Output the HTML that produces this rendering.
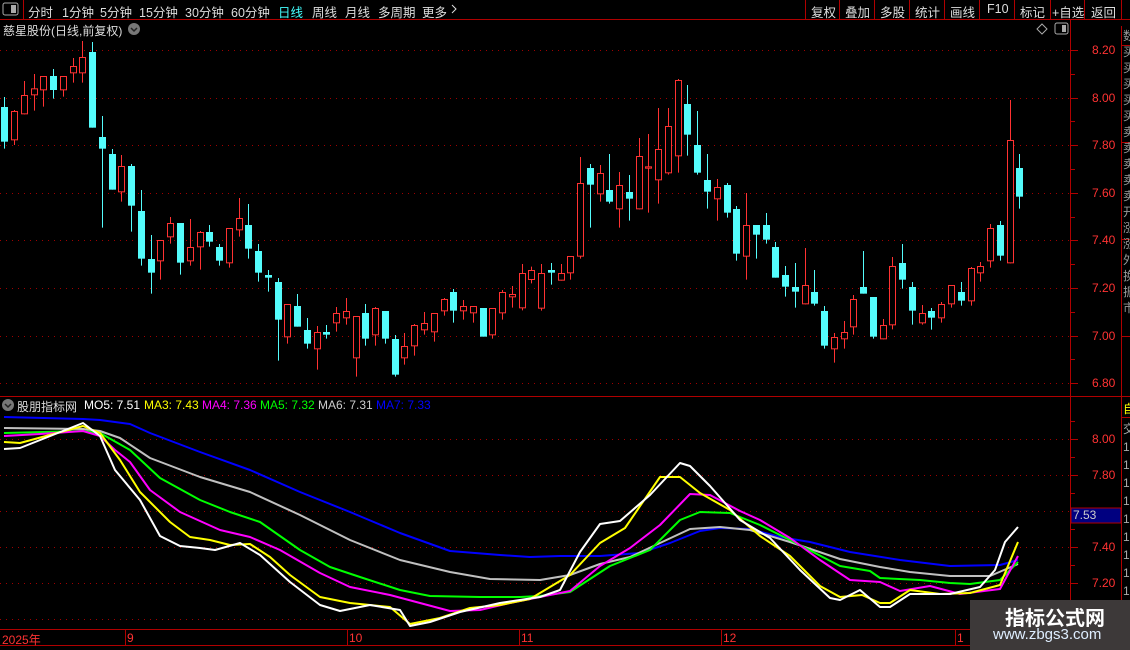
<!DOCTYPE html>
<html><head><meta charset="utf-8">
<style>
body{margin:0;width:1130px;height:650px;background:#000;overflow:hidden;position:relative;font-family:"Liberation Sans","Noto Sans CJK SC",sans-serif;font-size:12px;color:#ddd}
.a{position:absolute;white-space:nowrap}
.t{position:absolute;top:2px;font-size:12.5px;white-space:nowrap}
.h{position:absolute;top:398px;font-size:12px;white-space:nowrap}
</style></head><body>
<svg class="a" style="left:0;top:0" width="1130" height="650" id="s" xmlns="http://www.w3.org/2000/svg">
<g stroke="#b00000" stroke-width="1" fill="none">
<line x1="0" y1="19.5" x2="1130" y2="19.5"/>
<line x1="23.5" y1="0" x2="23.5" y2="19"/>
<line x1="805.5" y1="0" x2="805.5" y2="19"/><line x1="839.5" y1="0" x2="839.5" y2="19"/><line x1="874.5" y1="0" x2="874.5" y2="19"/><line x1="909.5" y1="0" x2="909.5" y2="19"/><line x1="944.5" y1="0" x2="944.5" y2="19"/><line x1="979.5" y1="0" x2="979.5" y2="19"/><line x1="1014.5" y1="0" x2="1014.5" y2="19"/><line x1="1050.5" y1="0" x2="1050.5" y2="19"/><line x1="1084.5" y1="0" x2="1084.5" y2="19"/><line x1="1121.5" y1="0" x2="1121.5" y2="19"/>
<line x1="1070.5" y1="20" x2="1070.5" y2="645"/>
<line x1="1121.5" y1="26" x2="1121.5" y2="650"/>
<line x1="0" y1="396.5" x2="1130" y2="396.5"/>
<line x1="0" y1="629.5" x2="1070" y2="629.5"/>
<line x1="0" y1="645.5" x2="1070" y2="645.5"/>
<line x1="1121" y1="45.5" x2="1130" y2="45.5"/><line x1="1121" y1="142.5" x2="1130" y2="142.5"/><line x1="1121" y1="239.5" x2="1130" y2="239.5"/><line x1="1121" y1="336.5" x2="1130" y2="336.5"/><line x1="1121" y1="417.5" x2="1130" y2="417.5"/>
<line x1="125.5" y1="630" x2="125.5" y2="645"/><line x1="347.5" y1="630" x2="347.5" y2="645"/><line x1="519.5" y1="630" x2="519.5" y2="645"/><line x1="721.5" y1="630" x2="721.5" y2="645"/><line x1="955.5" y1="630" x2="955.5" y2="645"/>
</g>
<g id="grid" stroke="#a00000" stroke-dasharray="1,5" stroke-width="1"></g>
<g id="ticks" stroke="#b00000"></g>
<g id="c"></g>
<g id="l" fill="none" stroke-width="2" stroke-linejoin="round"></g>
<rect x="1071" y="508" width="50" height="15" fill="#000080" stroke="#b00000"/>
<rect x="3" y="3" width="15" height="12" rx="2" fill="none" stroke="#aaa"/><rect x="11" y="5" width="5" height="8" fill="#aaa"/>
<rect x="1055" y="23" width="13" height="11" rx="2" fill="none" stroke="#aaa"/><rect x="1062" y="25" width="4" height="7" fill="#aaa"/>
<path d="M1042 24 l5 5 -5 5 -5 -5z" fill="none" stroke="#aaa"/>
<circle cx="134" cy="29" r="6" fill="#777"/><path d="M131 28 l3 3 3-3" stroke="#222" fill="none" stroke-width="1.5"/>
<circle cx="8" cy="405" r="6" fill="#777"/><path d="M5 404 l3 3 3-3" stroke="#222" fill="none" stroke-width="1.5"/>
<path d="M452 5 l4 4 -4 4" stroke="#ddd" fill="none"/>
</svg>
<div class="t" style="left:28px">分时</div>
<div class="t" style="left:62px">1分钟</div>
<div class="t" style="left:100px">5分钟</div>
<div class="t" style="left:139px">15分钟</div>
<div class="t" style="left:185px">30分钟</div>
<div class="t" style="left:231px">60分钟</div>
<div class="t" style="left:278px;color:#4ff">日线</div>
<div class="t" style="left:312px">周线</div>
<div class="t" style="left:345px">月线</div>
<div class="t" style="left:378px">多周期</div>
<div class="t" style="left:422px">更多</div>
<div class="t" style="left:811px">复权</div>
<div class="t" style="left:845px">叠加</div>
<div class="t" style="left:880px">多股</div>
<div class="t" style="left:915px">统计</div>
<div class="t" style="left:950px">画线</div>
<div class="t" style="left:987px">F10</div>
<div class="t" style="left:1020px">标记</div>
<div class="t" style="left:1052px">+自选</div>
<div class="t" style="left:1091px">返回</div>
<div class="a" style="left:3px;top:22px;font-size:12px">慈星股份(日线,前复权)</div>
<div class="h" style="left:17px;color:#ddd">股朋指标网</div>
<div class="h" style="left:84px;color:#fff">MO5: 7.51</div>
<div class="h" style="left:144px;color:#ff0">MA3: 7.43</div>
<div class="h" style="left:202px;color:#f0f">MA4: 7.36</div>
<div class="h" style="left:260px;color:#0f0">MA5: 7.32</div>
<div class="h" style="left:318px;color:#ccc">MA6: 7.31</div>
<div class="h" style="left:376px;color:#00f">MA7: 7.33</div>
<div id="ax"></div>
<div class="a" style="left:1073px;top:508px;color:#ccc;font-size:12px">7.53</div>
<div class="a" style="left:2px;top:631px;color:#f33;font-size:12px">2025年</div>
<div class="a" style="left:127px;top:631px;color:#f33">9</div>
<div class="a" style="left:349px;top:631px;color:#f33">10</div>
<div class="a" style="left:521px;top:631px;color:#f33">11</div>
<div class="a" style="left:723px;top:631px;color:#f33">12</div>
<div class="a" style="left:957px;top:631px;color:#f33">1</div>
<div class="a" style="left:1123px;top:28px;width:7px;overflow:hidden;color:#999;line-height:16px;font-size:12px">数<br>买<br>买<br>买<br>买<br>买<br>卖<br>卖<br>卖<br>卖<br>卖<br>开<br>涨<br>涨<br>外<br>换<br>振<br>市</div>
<div class="a" style="left:1123px;top:400px;width:7px;overflow:hidden;color:#ff0">自</div>
<div class="a" style="left:1123px;top:420px;width:7px;overflow:hidden;color:#aaa;line-height:18px">交<br>1<br>1<br>1<br>1<br>1<br>1<br>1<br>1<br>1<br>1<br>1</div>
<div class="a" style="left:970px;top:600px;width:160px;height:50px;background:#3d3939"></div>
<div class="a" style="left:1005px;top:602px;color:#fff;font-size:20px;font-weight:bold">指标公式网</div>
<div class="a" style="left:993px;top:626px;color:#dfeeff;font-size:15px">www.zbgs3.com</div>
<script>
var NS="http://www.w3.org/2000/svg";
function el(p,t,a){var e=document.createElementNS(NS,t);for(var k in a)e.setAttribute(k,a[k]);p.appendChild(e);return e;}
var g=document.getElementById('grid');
[50,97.6,145,193,240,288,336,383].forEach(function(y){el(g,'line',{x1:0,x2:1070,y1:Math.round(y)+.5,y2:Math.round(y)+.5});});
[439,475,511,547,583,619].forEach(function(y){el(g,'line',{x1:0,x2:1070,y1:y+.5,y2:y+.5});});
var tk=document.getElementById('ticks');
for(var y=50;y<=390;y+=23.8)el(tk,'line',{x1:1071,x2:(Math.round((y-50)/23.8)%2?1075:1078),y1:Math.round(y)+.5,y2:Math.round(y)+.5});
for(var y=421;y<=628;y+=18)el(tk,'line',{x1:1071,x2:(Math.round((y-439)/18)%2?1075:1078),y1:Math.round(y)+.5,y2:Math.round(y)+.5});
var ax=document.getElementById('ax'),h='';
['8.20','8.00','7.80','7.60','7.40','7.20','7.00','6.80'].forEach(function(t,i){h+='<div class="a" style="left:1092px;top:'+(43+i*47.6)+'px;color:#f33">'+t+'</div>';});
[['8.00',439],['7.80',475],['7.40',547],['7.20',583]].forEach(function(a){h+='<div class="a" style="left:1092px;top:'+(a[1]-7)+'px;color:#f33">'+a[0]+'</div>';});
ax.innerHTML=h;
var A=[['c',201,305,171,326],['r',213,301,210,315],['r',165,223,123,223],['r',145,166,102,212],['r',108,151,108,200],['c',108,150,87,176],['r',108,151,108,170],['r',78,100,54,128],['r',51,100,3,128],['c',36,263,6,263],['c',291,326,228,563],['c',342,449,327,449],['r',378,457,345,485],['c',378,497,372,575],['c',513,656,450,677],['c',657,698,585,761],['r',600,664,600,719],['r',549,592,531,611],['c',549,668,549,704],['r',621,664,537,677],['r',576,622,573,689],['c',576,605,555,620],['c',621,662,612,677],['r',564,670,564,683],['r',534,571,474,590],['c',555,626,492,656],['c',633,698,612,725],['c',705,713,690,755],['c',726,839,714,962],['r',792,892,792,911],['c',798,860,762,860],['c',870,911,834,926],['r',876,928,858,989],['c',876,884,855,896],['r',819,850,801,875],['r',813,835,774,854],['r',828,955,828,1010],['c',819,896,792,917],['r',804,886,801,917],['c',813,896,813,911],['c',897,1004,885,1010],['r',918,955,879,974],['r',855,919,852,947],['r',849,871,816,884],['r',819,877,819,905],['r',777,814,774,827],['c',756,812,747,848],['r',798,814,780,839],['r',798,820,798,848],['c',804,890,804,890],['r',804,886,804,896],['r',756,820,750,839],['r',762,772,738,803],['r',699,805,672,811]];
var B=[['r',600,630,590,640],['r',609,716,582,722],['c',600,608,579,644],['r',609,632,582,632],['r',558,610,558,629],['r',339,560,261,566],['c',294,344,282,473],['r',309,373,285,395],['c',360,395,252,401],['r',345,418,306,473],['c',366,386,315,452],['r',258,418,204,418],['r',289,296,192,428],['r',237,331,114,401],['r',168,310,114,314],['r',30,259,27,308],['c',102,194,45,257],['c',225,308,123,314],['c',330,365,252,416],['r',351,388,327,452],['c',345,428,339,443],['c',417,551,408,572],['r',465,560,369,629],['c',465,494,465,566],['c',465,509,429,521],['c',531,623,516,623],['c',615,650,588,680],['c',651,665,579,713],['r',645,703,534,703],['c',666,701,600,707],['c',723,827,708,836],['r',801,838,789,878],['r',786,808,753,836],['r',687,772,675,794],['c',651,671,543,671],['c',681,800,681,806],['r',765,808,747,808],['r',588,766,561,778],['c',579,629,522,656],['c',651,722,636,764],['r',729,760,705,764],['c',723,743,714,779],['r',702,745,696,758],['r',645,703,645,713],['c',666,692,636,707],['r',594,694,591,707],['r',588,610,576,635],['r',474,574,462,593],['c',465,557,453,572],['r',210,580,90,580],['c',294,380,252,416]];
var C=[];A.forEach(function(a){C.push([a[0],40+a[1]/3,40+a[2]/3,40+a[3]/3,40+a[4]/3]);});
B.forEach(function(a){C.push([a[0],70+a[1]/3,70+a[2]/3,70+a[3]/3,70+a[4]/3]);});
var cg=document.getElementById('c');
C.forEach(function(c,i){var x=Math.round(4.3+i*9.76);var col=c[0]=='c'?'#54FCFC':'#FF3232';
el(cg,'line',{x1:x+.5,x2:x+.5,y1:c[3],y2:c[4],stroke:col});
var t=c[1],b=Math.max(c[2],c[1]+1.5);
if(c[0]=='c')el(cg,'rect',{x:x-3,y:t,width:7,height:b-t,fill:col});
else el(cg,'rect',{x:x-2.5,y:t+.5,width:6,height:b-t-1,fill:'#000',stroke:col});});
var L={
'#0000ff':[[4,417],[83,419],[100,420],[130,424],[150,433],[200,452],[250,470],[300,492],[350,512],[400,533],[450,551],[500,555],[530,557],[560,556],[600,556],[640,553],[670,543],[700,531],[720,528],[750,529],[780,537],[810,542],[850,552],[900,560],[950,566],[1000,565],[1018,560]],
'#c0c0c0':[[4,428],[83,429],[100,431],[120,438],[150,458],[200,477],[250,492],[300,515],[350,540],[400,560],[450,572],[490,579],[540,580],[570,575],[600,564],[630,557],[660,543],[690,529],[720,527],[750,530],[790,542],[840,559],[880,567],[910,572],[950,576],[990,576],[1018,564]],
'#00ff00':[[4,433],[83,431],[100,433],[130,450],[160,478],[200,500],[230,512],[260,522],[300,550],[330,567],[360,577],[400,590],[430,596],[480,597],[520,597],[540,596],[570,592],[610,566],[650,550],[680,520],[700,512],[730,513],[760,525],[790,540],[840,566],[870,571],[880,578],[920,580],[950,583],[970,584],[1000,580],[1018,562]],
'#ff00ff':[[4,436],[40,434],[83,431],[100,436],[115,450],[130,462],[150,490],[180,512],[220,530],[250,537],[280,550],[320,573],[350,587],[390,595],[420,603],[450,611],[480,610],[510,603],[540,597],[570,591],[600,566],[630,548],[660,525],[690,494],[710,495],[740,511],[760,520],[790,538],[820,560],[850,580],[880,582],[900,591],[930,586],[960,594],[1000,589],[1018,556]],
'#ffff00':[[4,442],[20,443],[83,426],[100,433],[120,460],[140,492],[170,522],[190,537],[210,540],[230,545],[250,544],[270,557],[290,575],[320,597],[350,603],[370,605],[390,607],[410,624],[440,618],[470,608],[500,605],[530,599],[570,575],[600,543],[625,528],[660,477],[680,477],[700,493],[730,510],[760,536],[790,556],[820,586],[840,597],[862,595],[880,603],[890,603],[910,590],[940,594],[970,593],[1000,585],[1018,542]],
'#ffffff':[[4,449],[20,448],[83,423],[100,436],[115,470],[140,500],[160,536],[180,546],[200,548],[215,550],[240,543],[260,555],[290,582],[320,605],[340,611],[370,605],[400,610],[410,626],[430,622],[460,612],[500,603],[540,597],[560,590],[580,552],[600,524],[620,521],[650,495],[680,463],[690,466],[710,486],[740,520],[770,538],[800,570],[830,598],[840,600],[860,590],[880,607],[890,607],[910,594],[950,594],[980,587],[995,570],[1005,542],[1018,527]]};
var lg=document.getElementById('l');
for(var k in L)el(lg,'polyline',{points:L[k].map(function(p){return p.join(',');}).join(' '),stroke:k});
</script>
</body></html>
